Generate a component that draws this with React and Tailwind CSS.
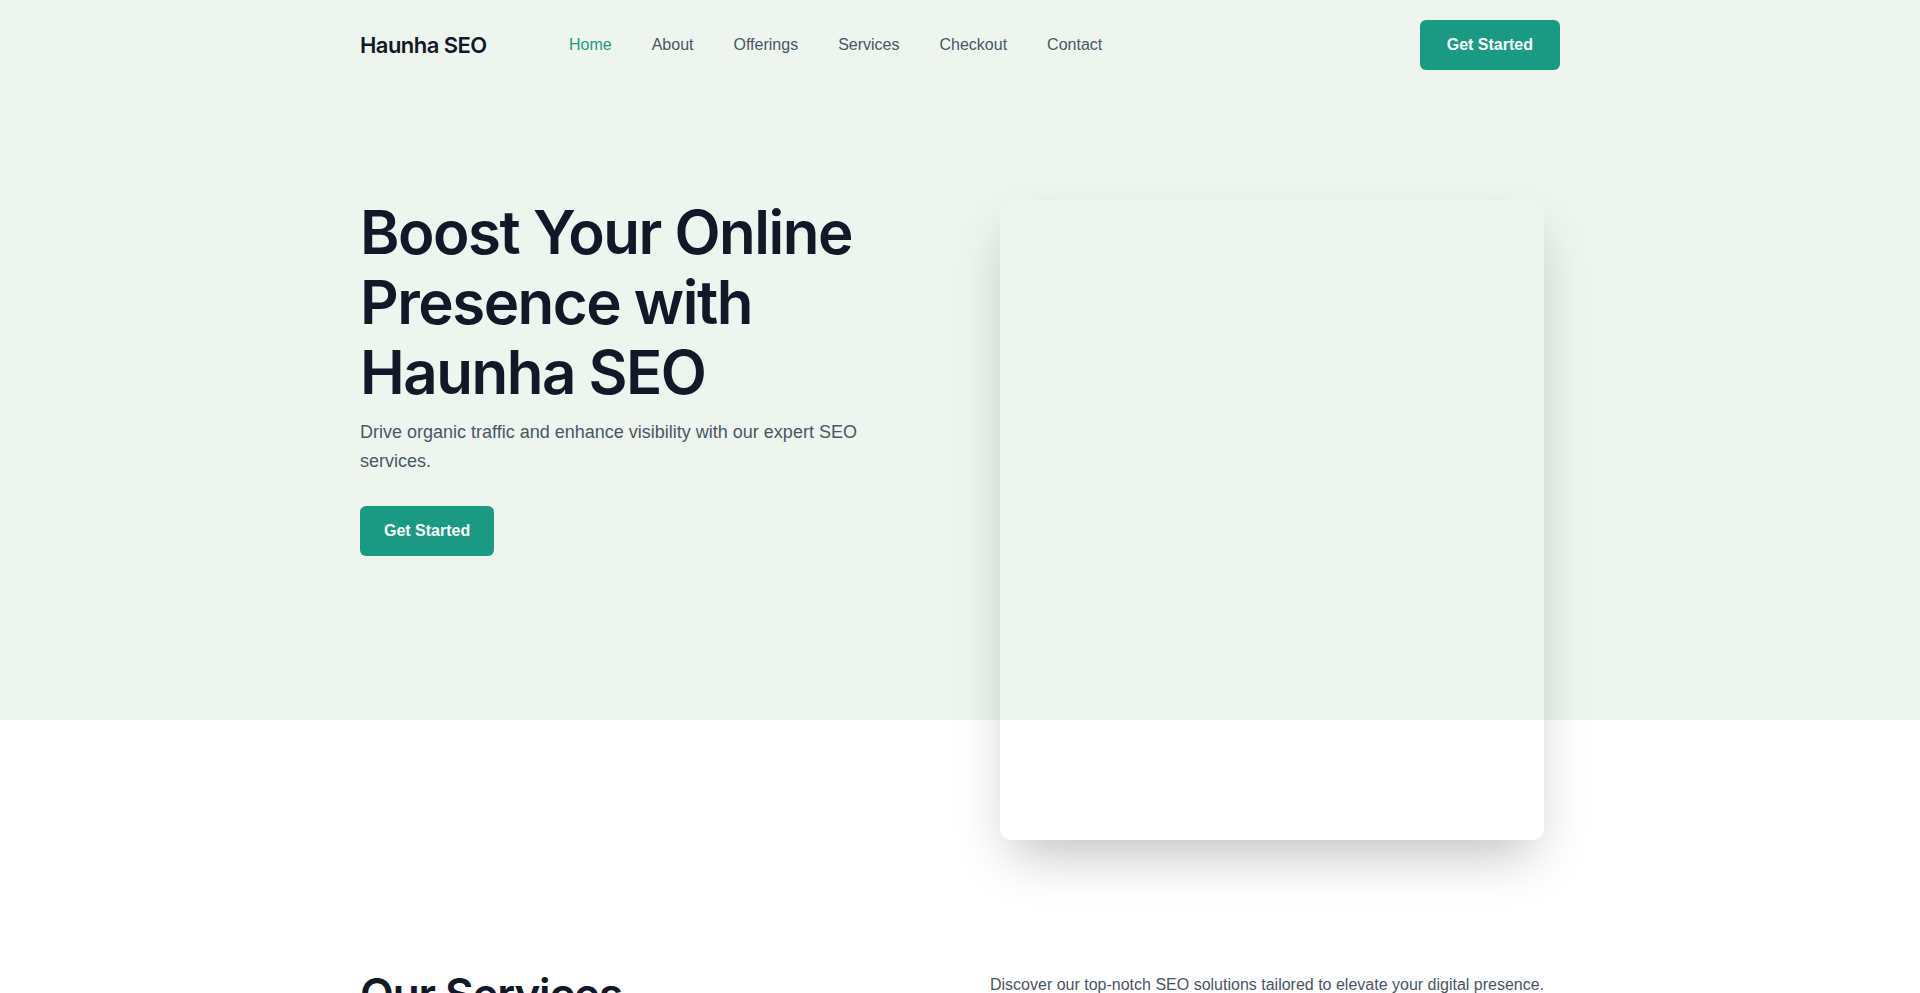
const NAV_LINKS = ['Home', 'About', 'Offerings', 'Services', 'Checkout', 'Contact']

const display = "font-['Inter','Noto_Sans',sans-serif]"

export default function App() {
  return (
    <div className="min-h-screen bg-white font-['Liberation_Sans',Arial,sans-serif] text-gray-600">
      {/* Hero */}
      <section className="h-[720px] bg-[#eef5ef]">
        <header className="mx-auto flex h-[90px] w-[1200px] items-center">
          <a href="#" className={`${display} w-[129px] text-[22px] font-semibold tracking-tight text-[#111827]`}>
            Haunha SEO
          </a>
          <nav className="ml-20 flex items-center gap-10 text-base">
            {NAV_LINKS.map((link, i) => (
              <a
                key={link}
                href="#"
                className={i === 0 ? 'text-[#1a9a82]' : 'text-gray-600 hover:text-[#1a9a82]'}
              >
                {link}
              </a>
            ))}
          </nav>
          <button className="ml-auto rounded-md bg-[#1a9a82] px-[27px] py-[13px] text-base leading-6 font-bold text-white hover:bg-[#168a74]">
            Get Started
          </button>
        </header>

        <div className="mx-auto grid w-[1200px] grid-cols-2 gap-[60px] pt-[107px]">
          <div>
            <h1 className={`${display} text-[60px] leading-[70px] font-semibold tracking-tight text-[#111827]`}>
              Boost Your Online Presence with Haunha SEO
            </h1>
            <p className="mt-[11px] max-w-[540px] text-lg leading-relaxed text-gray-600">
              Drive organic traffic and enhance visibility with our expert SEO services.
            </p>
            <button className="mt-[29px] rounded-md bg-[#1a9a82] px-6 py-[13px] text-base leading-6 font-bold text-white hover:bg-[#168a74]">
              Get Started
            </button>
          </div>
          <div>
            <div className="mt-[3px] ml-[10px] h-[640px] w-[544px] rounded-xl shadow-2xl" />
          </div>
        </div>
      </section>

      {/* Services */}
      <section className="mx-auto grid w-[1200px] grid-cols-2 items-start gap-[60px] pt-[250px] pb-24">
        <h2 className={`${display} text-[44px] leading-[1.1] font-semibold tracking-tight text-[#111827]`}>
          Our Services
        </h2>
        <p className="pt-[3px] text-base leading-6 text-gray-600">
          Discover our top-notch SEO solutions tailored to elevate your digital presence.
        </p>
      </section>
    </div>
  )
}
